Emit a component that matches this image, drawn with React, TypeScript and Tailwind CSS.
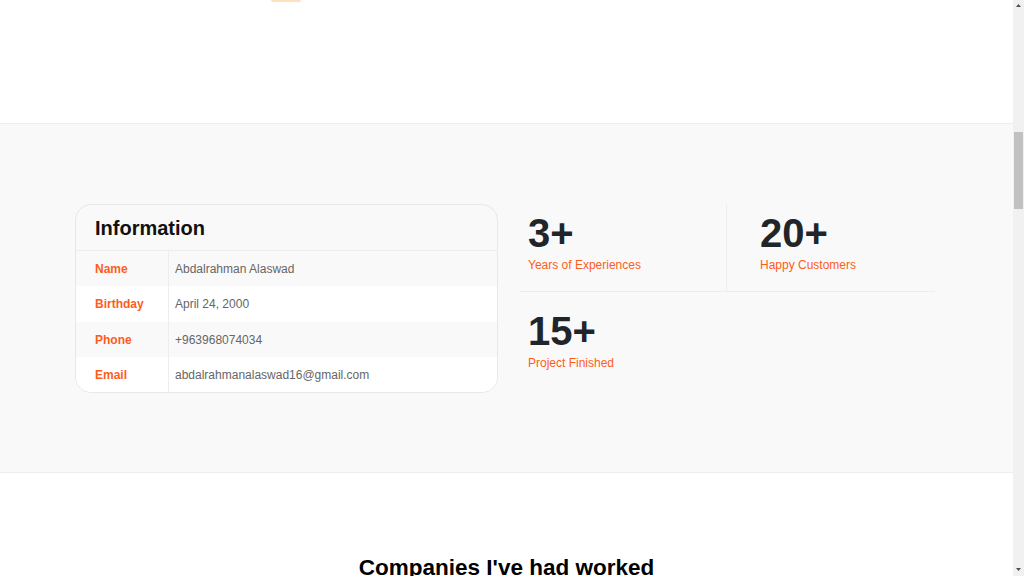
import React from "react";

const rows = [
  { label: "Name", value: "Abdalrahman Alaswad", h: "h-[35px]", bg: "" },
  { label: "Birthday", value: "April 24, 2000", h: "h-[36px]", bg: "bg-white" },
  { label: "Phone", value: "+963968074034", h: "h-[35px]", bg: "" },
  { label: "Email", value: "abdalrahmanalaswad16@gmail.com", h: "h-[35px]", bg: "bg-white" },
];

function Stat({ num, label }: { num: string; label: string }) {
  return (
    <div>
      <div className="text-[40px] leading-[40px] font-bold text-[#212529]">{num}</div>
      <div className="mt-[3px] text-[12px] leading-[18px] text-[#ff5c1a]">{label}</div>
    </div>
  );
}

export default function App() {
  return (
    <div
      className="flex h-screen w-full overflow-hidden bg-white"
      style={{ fontFamily: '"Liberation Sans", Arial, sans-serif' }}
    >
      <main className="flex flex-1 flex-col">
        <div className="h-[124px] shrink-0 border-b border-[#ededed] bg-white">
          <div className="ml-[271px] h-[2px] w-[30px] rounded-b-full bg-[#fde0bd]" />
        </div>

        <section className="shrink-0 border-b border-[#ededed] bg-[#f9f9f9] pt-[80px] pb-[79px]">
          <div className="mx-auto flex w-[863px] gap-[22px] pr-[3px]">
            <div className="w-[423px] overflow-hidden rounded-2xl border border-[#e8e8e8]">
              <div className="flex h-[46px] items-center border-b border-[#ededed] pl-[19px]">
                <h2 className="text-[20px] font-bold text-[#111]">Information</h2>
              </div>
              {rows.map((r) => (
                <div key={r.label} className={`flex ${r.h} ${r.bg}`}>
                  <div className="flex w-[93px] items-center border-r border-[#ededed] pl-[19px] text-[12px] font-bold text-[#ff5c1a]">
                    {r.label}
                  </div>
                  <div className="flex items-center pl-[6px] text-[12px] text-[#666]">{r.value}</div>
                </div>
              ))}
            </div>

            <div className="w-[415px]">
              <div className="flex h-[88px] border-b border-[#ededed]">
                <div className="w-[207px] border-r border-[#ededed] pl-[8px] pt-[9px]">
                  <Stat num="3+" label="Years of Experiences" />
                </div>
                <div className="flex-1 pl-[33px] pt-[9px]">
                  <Stat num="20+" label="Happy Customers" />
                </div>
              </div>
              <div className="pl-[8px] pt-[19px]">
                <Stat num="15+" label="Project Finished" />
              </div>
            </div>
          </div>
        </section>

        <section className="flex-1 bg-white pt-[81px]">
          <h2 className="text-center text-[22.5px] leading-[28px] font-bold text-black">
            Companies I've had worked
          </h2>
        </section>
      </main>

      <aside className="flex w-[11px] shrink-0 flex-col bg-[#f1f1f1]">
        <div className="flex h-[11px] items-center justify-center">
          <svg width="5" height="3" viewBox="0 0 5 3">
            <polygon points="2.5,0 5,3 0,3" fill="#505050" />
          </svg>
        </div>
        <div className="h-[121px]" />
        <div className="mx-[1px] h-[77px] bg-[#c1c1c1]" />
        <div className="flex-1" />
        <div className="flex h-[14px] items-center justify-center">
          <svg width="5" height="3" viewBox="0 0 5 3">
            <polygon points="0,0 5,0 2.5,3" fill="#505050" />
          </svg>
        </div>
      </aside>
    </div>
  );
}
